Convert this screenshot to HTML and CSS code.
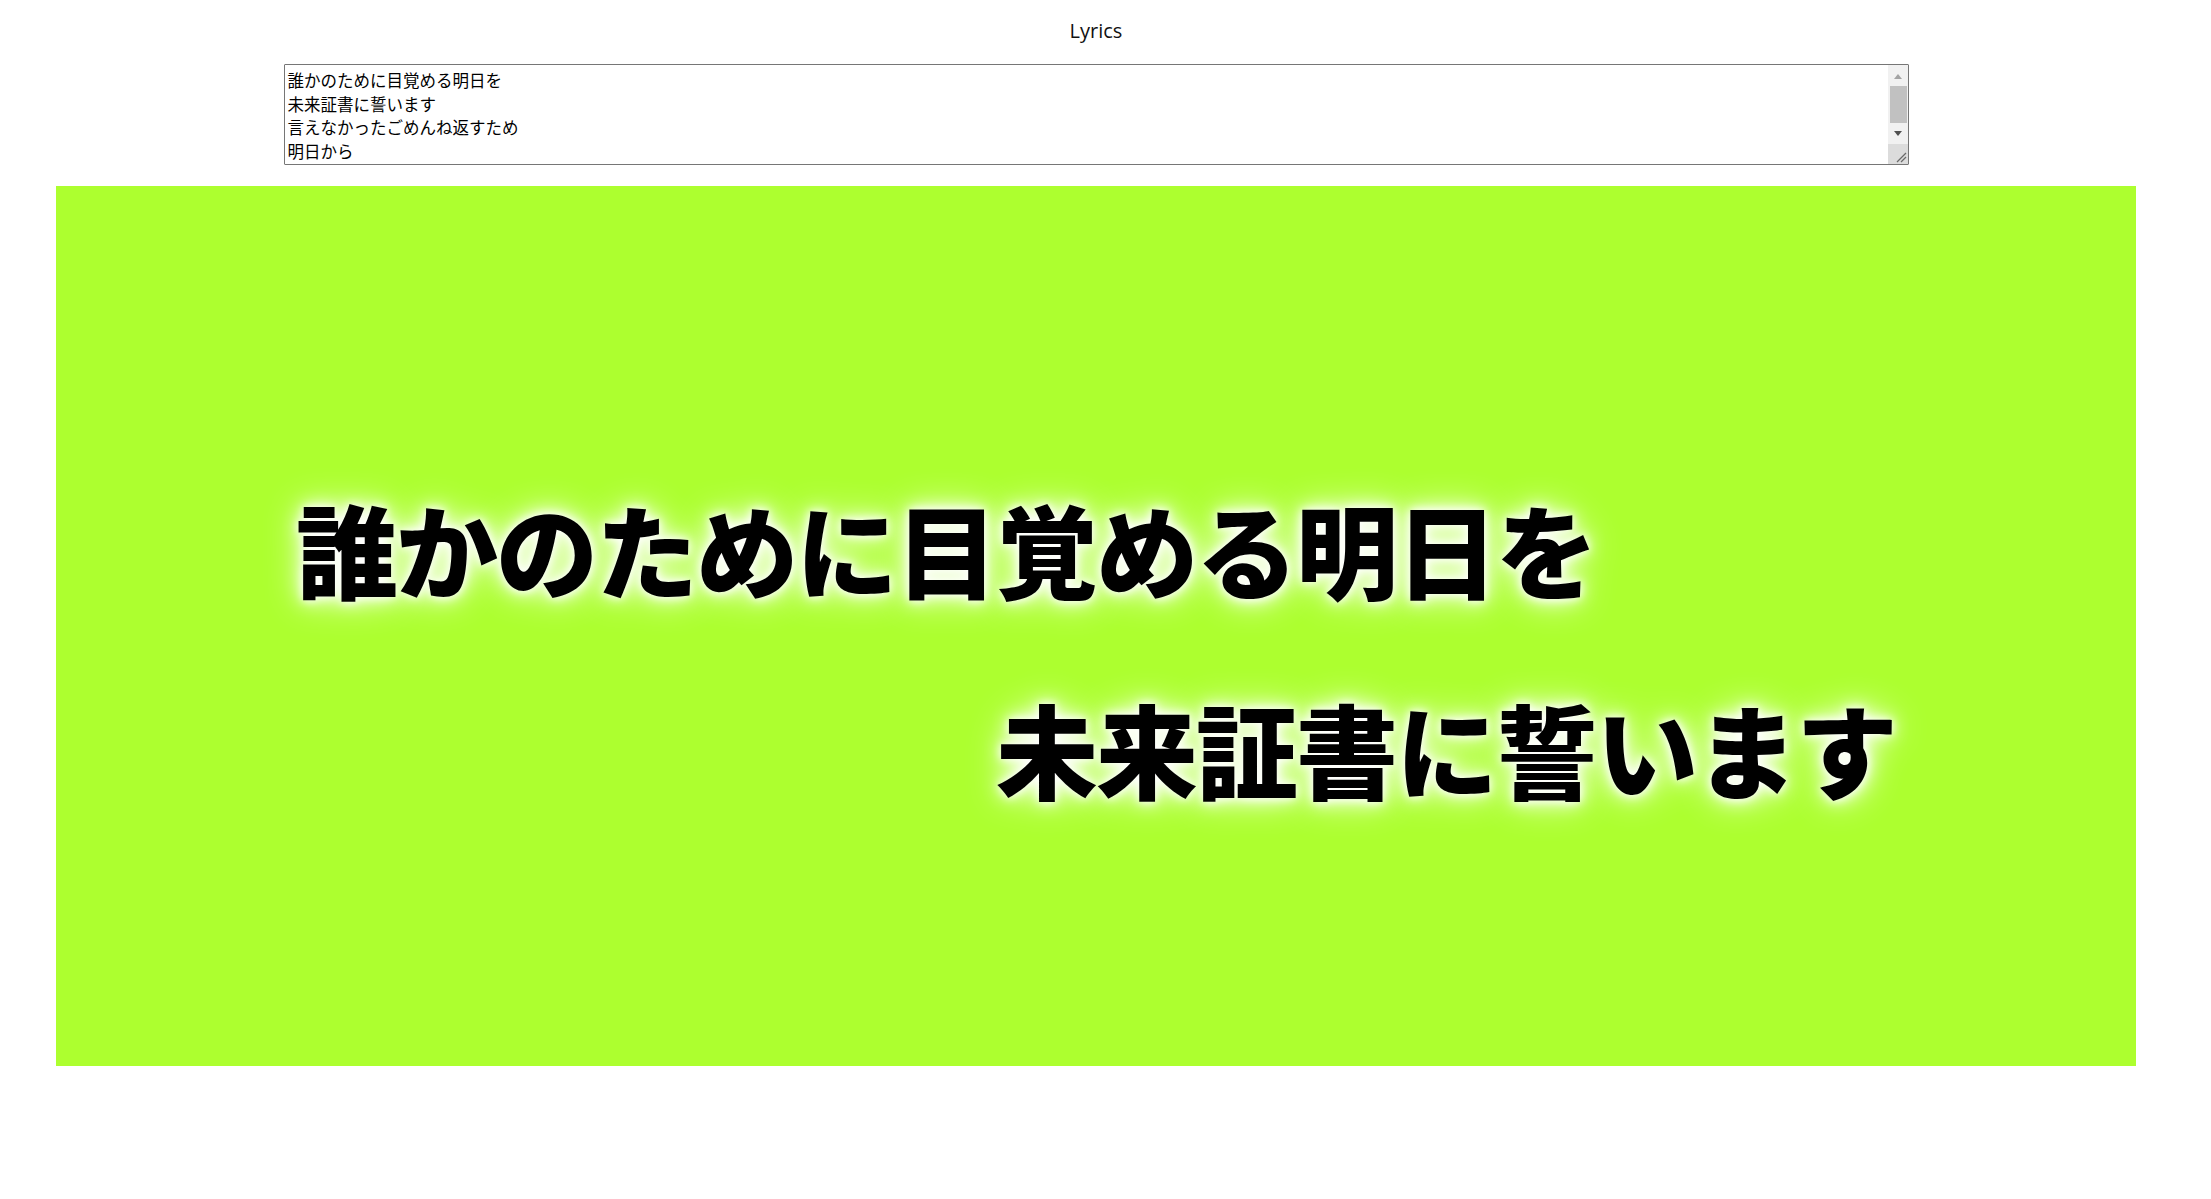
FILE: index.html
```html
<!DOCTYPE html>
<html lang="ja">
<head>
<meta charset="utf-8">
<title>Lyrics</title>
<link rel="stylesheet" href="styles.css">
</head>
<body>
<div class="page">
  <div class="title">Lyrics</div>
  <div class="textarea-wrap">
    <textarea class="lyrics-input">誰かのために目覚める明日を
未来証書に誓います
言えなかったごめんね返すため
明日から
</textarea>
    <div class="fake-scrollbar" aria-hidden="true">
      <div class="sb-btn sb-up"><span class="tri tri-up"></span></div>
      <div class="sb-track"><div class="sb-thumb"></div></div>
      <div class="sb-btn sb-down"><span class="tri tri-down"></span></div>
      <div class="sb-corner">
        <svg width="20" height="20" viewBox="0 0 20 20">
          <line x1="9" y1="18" x2="18" y2="9" stroke="#6a6a6a" stroke-width="1.2"/>
          <line x1="13" y1="18" x2="18" y2="13" stroke="#6a6a6a" stroke-width="1.2"/>
        </svg>
      </div>
    </div>
  </div>
  <div class="stage">
    <div class="line line-left">誰かのために目覚める明日を</div>
    <div class="line line-right">未来証書に誓います</div>
  </div>
</div>
</body>
</html>
```

FILE: styles.css
```css
html, body {
  margin: 0;
  padding: 0;
  background: #ffffff;
}

.page {
  width: 2192px;
  display: flex;
  flex-direction: column;
  align-items: center;
}

.title {
  padding-top: 17px;
  font-family: "Open Sans", "Noto Sans", sans-serif;
  font-size: 20px;
  line-height: 27px;
  color: #111;
}

.textarea-wrap {
  position: relative;
  width: 1625px;
  height: 101px;
  margin-top: 20px;
}

.lyrics-input {
  display: block;
  box-sizing: border-box;
  width: 100%;
  height: 100%;
  margin: 0;
  padding: 4px 24px 2px 3px;
  border: 1px solid #767676;
  border-radius: 1px;
  font-family: "Noto Sans CJK JP", sans-serif;
  font-size: 16.5px;
  line-height: 23.6px;
  color: #000;
  resize: none;
  overflow: hidden;
  outline: none;
}

.fake-scrollbar {
  position: absolute;
  top: 1px;
  right: 1px;
  bottom: 1px;
  width: 20px;
  display: flex;
  flex-direction: column;
  background: #f1f1f1;
}

.sb-btn {
  height: 20px;
  flex: 0 0 20px;
  display: flex;
  align-items: center;
  justify-content: center;
}

.sb-up {
  padding-top: 3px;
  box-sizing: border-box;
}

.sb-down {
  padding-bottom: 2px;
  box-sizing: border-box;
}

.tri {
  width: 0;
  height: 0;
  border-left: 4.5px solid transparent;
  border-right: 4.5px solid transparent;
}

.tri-up {
  border-bottom: 5px solid #a3a3a3;
}

.tri-down {
  border-top: 5px solid #505050;
}

.sb-track {
  flex: 1;
  display: flex;
  flex-direction: column;
  padding: 1px 1px 0 2px;
}

.sb-thumb {
  height: 37px;
  background: #c1c1c1;
}

.sb-corner {
  flex: 0 0 20px;
  height: 20px;
  background: #dcdcdc;
}

.sb-corner svg {
  display: block;
}

.stage {
  box-sizing: border-box;
  width: 2080px;
  height: 880px;
  margin-top: 21px;
  background: #adff2f;
  display: flex;
  flex-direction: column;
  padding: 310px 240px 0 240px;
  gap: 96px;
}

.line {
  font-family: "Noto Sans CJK JP", sans-serif;
  font-weight: 900;
  font-size: 102px;
  line-height: 104px;
  letter-spacing: -2px;
  color: #000;
  white-space: nowrap;
  text-shadow: 0 0 8px #fff, 0 0 18px #fff, 0 0 36px #fff;
}

.line-left {
  align-self: flex-start;
}

.line-right {
  align-self: flex-end;
}
```
